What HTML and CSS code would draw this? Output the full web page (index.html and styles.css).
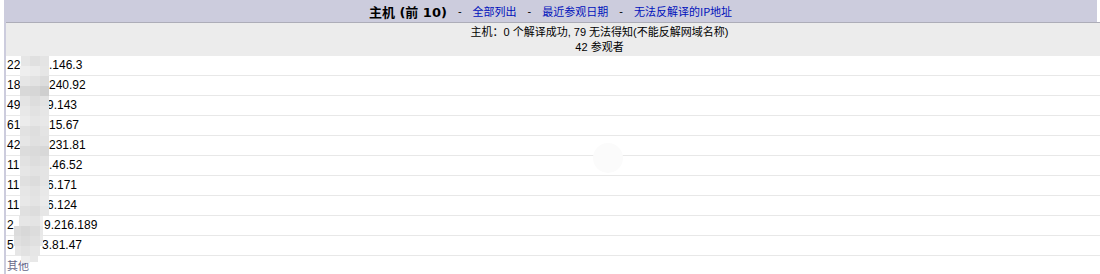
FILE: index.html
```html
<!DOCTYPE html>
<html lang="zh">
<head>
<meta charset="utf-8">
<title>主机 (前 10)</title>
<link rel="stylesheet" href="styles.css">
</head>
<body>
<div class="box">
  <div class="title">
    <b class="ttl">主机 (前 10)</b>
    <span class="sep">-</span>
    <a class="lnk" href="#">全部列出</a>
    <span class="sep">-</span>
    <a class="lnk" href="#">最近参观日期</a>
    <span class="sep">-</span>
    <a class="lnk" href="#">无法反解译的IP地址</a>
  </div>
  <div class="inner">
    <div class="summary">
      <div>主机：0 个解译成功, 79 无法得知(不能反解网域名称)</div>
      <div>42 参观者</div>
    </div>
    <div class="rows">
      <div class="row"><span class="pre">22</span><span>.146.3</span></div>
      <div class="row"><span class="pre">18</span><span>240.92</span></div>
      <div class="row"><span class="pre s2">49</span><span>9.143</span></div>
      <div class="row"><span class="pre">61</span><span>15.67</span></div>
      <div class="row"><span class="pre">42</span><span>231.81</span></div>
      <div class="row"><span class="pre">11</span><span>.46.52</span></div>
      <div class="row"><span class="pre s2">11</span><span>6.171</span></div>
      <div class="row"><span class="pre s2">11</span><span>6.124</span></div>
      <div class="row"><span class="pre s5">2</span><span>9.216.189</span></div>
      <div class="row"><span class="pre s7">5</span><span>3.81.47</span></div>
      <div class="row other">其他</div>
      <svg class="mask" width="38" height="210" viewBox="0 0 38 210" aria-hidden="true">
        <defs>
          <filter id="soft" x="-20%" y="-5%" width="140%" height="110%">
            <feGaussianBlur stdDeviation="0.7"/>
          </filter>
        </defs>
        <g filter="url(#soft)">
          <rect x="7" y="0" width="9" height="10" fill="#e6e6e6"/><rect x="16" y="0" width="10" height="10" fill="#e0e0e0"/><rect x="26" y="0" width="9" height="10" fill="#e4e4e4"/>
          <rect x="6" y="10" width="10" height="10" fill="#eeeeee"/><rect x="16" y="10" width="10" height="10" fill="#ebebeb"/><rect x="26" y="10" width="9" height="10" fill="#e6e6e6"/>
          <rect x="6" y="20" width="10" height="10" fill="#e6e6e6"/><rect x="16" y="20" width="10" height="10" fill="#e2e2e2"/><rect x="26" y="20" width="9" height="10" fill="#dcdcdc"/>
          <rect x="6" y="30" width="10" height="10" fill="#d8d8d8"/><rect x="16" y="30" width="10" height="10" fill="#d6d6d6"/><rect x="26" y="30" width="9" height="10" fill="#cfcfcf"/>
          <rect x="6" y="40" width="10" height="10" fill="#e4e4e4"/><rect x="16" y="40" width="10" height="10" fill="#dddddd"/><rect x="26" y="40" width="9" height="10" fill="#e2e2e2"/>
          <rect x="6" y="50" width="10" height="10" fill="#e8e8e8"/><rect x="16" y="50" width="10" height="10" fill="#e2e2e2"/><rect x="26" y="50" width="9" height="10" fill="#e6e6e6"/>
          <rect x="6" y="60" width="10" height="10" fill="#ececec"/><rect x="16" y="60" width="10" height="10" fill="#e6e6e6"/><rect x="26" y="60" width="9" height="10" fill="#e8e8e8"/>
          <rect x="6" y="70" width="10" height="10" fill="#e2e2e2"/><rect x="16" y="70" width="10" height="10" fill="#dedede"/><rect x="26" y="70" width="9" height="10" fill="#e4e4e4"/>
          <rect x="6" y="80" width="10" height="10" fill="#e6e6e6"/><rect x="16" y="80" width="10" height="10" fill="#e0e0e0"/><rect x="26" y="80" width="9" height="10" fill="#e2e2e2"/>
          <rect x="6" y="90" width="10" height="10" fill="#dcdcdc"/><rect x="16" y="90" width="10" height="10" fill="#dadada"/><rect x="26" y="90" width="9" height="10" fill="#d8d8d8"/>
          <rect x="6" y="100" width="10" height="10" fill="#e2e2e2"/><rect x="16" y="100" width="10" height="10" fill="#dddddd"/><rect x="26" y="100" width="9" height="10" fill="#e0e0e0"/>
          <rect x="6" y="110" width="10" height="10" fill="#e6e6e6"/><rect x="16" y="110" width="10" height="10" fill="#e2e2e2"/><rect x="26" y="110" width="9" height="10" fill="#e4e4e4"/>
          <rect x="6" y="120" width="10" height="10" fill="#e0e0e0"/><rect x="16" y="120" width="10" height="10" fill="#dcdcdc"/><rect x="26" y="120" width="9" height="10" fill="#e4e4e4"/>
          <rect x="6" y="130" width="10" height="10" fill="#e6e6e6"/><rect x="16" y="130" width="10" height="10" fill="#e2e2e2"/><rect x="26" y="130" width="9" height="10" fill="#e8e8e8"/>
          <rect x="6" y="140" width="10" height="10" fill="#e8e8e8"/><rect x="16" y="140" width="10" height="10" fill="#e4e4e4"/><rect x="26" y="140" width="9" height="10" fill="#eaeaea"/>
          <rect x="6" y="150" width="10" height="10" fill="#e0e0e0"/><rect x="16" y="150" width="10" height="10" fill="#dddddd"/><rect x="26" y="150" width="9" height="10" fill="#e6e6e6"/>
          <rect x="5" y="160" width="11" height="10" fill="#e6e6e6"/><rect x="16" y="160" width="10" height="10" fill="#e4e4e4"/><rect x="26" y="160" width="3" height="10" fill="#eeeeee"/>
          <rect x="0" y="170" width="7" height="10" fill="#dcdcdc"/><rect x="7" y="170" width="9" height="10" fill="#d8d8d8"/><rect x="16" y="170" width="10" height="10" fill="#dcdcdc"/><rect x="26" y="170" width="3" height="10" fill="#e8e8e8"/>
          <rect x="0" y="180" width="7" height="10" fill="#e0e0e0"/><rect x="7" y="180" width="9" height="10" fill="#dcdcdc"/><rect x="16" y="180" width="10" height="10" fill="#e0e0e0"/><rect x="26" y="180" width="3" height="10" fill="#eaeaea"/>
          <rect x="1" y="190" width="6" height="9" fill="#e6e6e6"/><rect x="7" y="190" width="9" height="10" fill="#e2e2e2"/><rect x="16" y="190" width="10" height="10" fill="#e6e6e6"/>
          <rect x="7" y="200" width="9" height="7" fill="#eeeeee"/><rect x="16" y="200" width="8" height="6" fill="#e8e8e8"/>
        </g>
      </svg>
      <div class="dot"></div>
    </div>
  </div>
</div>
</body>
</html>
```
FILE: styles.css
```css
html, body {
  margin: 0;
  padding: 0;
  overflow: hidden;
  background: #ffffff;
}
body {
  font-family: "Liberation Sans", "Noto Sans CJK SC", sans-serif;
  font-size: 12px;
  color: #000000;
}
.box {
  margin-left: 4px;
  width: 1093px;
  border-left: 2px solid #ccccdd;
  box-sizing: border-box;
}
.title {
  height: 22px;
  margin-left: -2px;
  background: #ccccdd;
  display: flex;
  align-items: center;
  justify-content: center;
  font-size: 11px;
}
.ttl {
  font-size: 13px;
  font-weight: bold;
  font-family: "DejaVu Sans", "Noto Sans CJK SC", sans-serif;
}
.sep {
  margin: 0 11px;
  color: #000;
}
.lnk {
  color: #0011bb;
  text-decoration: none;
  font-family: "Noto Sans CJK SC", sans-serif;
}
.inner {
  width: 1187px;
  border-top: 1px solid #adadb8;
}
.summary {
  background: #ececec;
  height: 30px;
  padding: 2px 0 1px;
  text-align: center;
  font-size: 11px;
  line-height: 15px;
}
.rows {
  position: relative;
}
.row {
  height: 19px;
  line-height: 19px;
  padding-left: 1px;
  border-bottom: 1px solid #e8e8e8;
  white-space: nowrap;
}
.pre {
  display: inline-block;
  width: 42px;
}
.pre.s2 { width: 40px; }
.pre.s5 { width: 37px; }
.pre.s7 { width: 35px; }
.row.other {
  border-bottom: none;
  color: #666688;
  font-size: 11px;
  font-family: "Noto Sans CJK SC", sans-serif;
}
.mask {
  position: absolute;
  left: 8px;
  top: 0;
  display: block;
}
.dot {
  position: absolute;
  left: 587px;
  top: 87px;
  width: 30px;
  height: 30px;
  border-radius: 50%;
  background: #fbfbfb;
}
```
